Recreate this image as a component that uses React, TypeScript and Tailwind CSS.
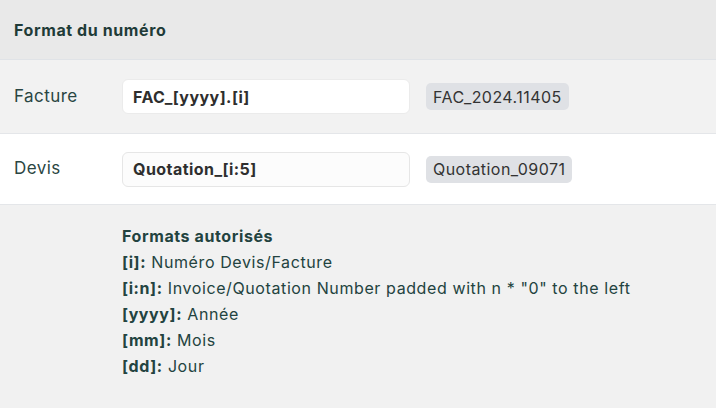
import React from "react";

const rows = [
  { label: "Facture", value: "FAC_[yyyy].[i]", preview: "FAC_2024.11405", bg: "bg-[#f2f2f2]", input: "bg-white border-[#ebebeb]" },
  { label: "Devis", value: "Quotation_[i:5]", preview: "Quotation_09071", bg: "bg-white", input: "bg-[#fcfcfc] border-[#e6e6e6]" },
];

const formats: [string, string][] = [
  ["[i]:", "Numéro Devis/Facture"],
  ["[i:n]:", 'Invoice/Quotation Number padded with n * "0" to the left'],
  ["[yyyy]:", "Année"],
  ["[mm]:", "Mois"],
  ["[dd]:", "Jour"],
];

export default function App() {
  return (
    <div className="w-[716px] h-[414px] bg-white overflow-hidden tracking-[0.45px]" style={{ fontFamily: "Inter, 'Noto Sans', sans-serif" }}>
      <div className="h-[60px] bg-[#e9e9e9] border-b border-[#e0e3e7] flex items-center px-[14px]">
        <span className="text-[16px] font-bold text-[#1f3b38] tracking-[0.6px]">Format du numéro</span>
      </div>
      {rows.map((r, i) => (
        <div
          key={r.label}
          className={`${r.bg} flex items-center border-b border-[#e4e6e9] ${i === 0 ? "h-[74px]" : "h-[71px]"}`}
        >
          <div className="w-[122px] pl-[14px] text-[17px] text-[#2a4643]">{r.label}</div>
          <div className={`w-[288px] h-[35px] rounded-[6px] border ${r.input} flex items-center px-[10px] text-[16px] font-bold text-[#2e2e2e]`}>
            {r.value}
          </div>
          <div className="ml-[16px] h-[27px] rounded-[5px] bg-[#dfe1e5] px-[7px] flex items-center text-[16px] text-[#333333]">
            {r.preview}
          </div>
        </div>
      ))}
      <div className="bg-[#f1f1f1] h-[203px] pt-[18px] pl-[122px] text-[16px] leading-[26px] text-[#234340] tracking-[0.6px]">
        <div className="font-bold">Formats autorisés</div>
        {formats.map(([k, v]) => (
          <div key={k}>
            <span className="font-bold">{k}</span> {v}
          </div>
        ))}
      </div>
    </div>
  );
}
